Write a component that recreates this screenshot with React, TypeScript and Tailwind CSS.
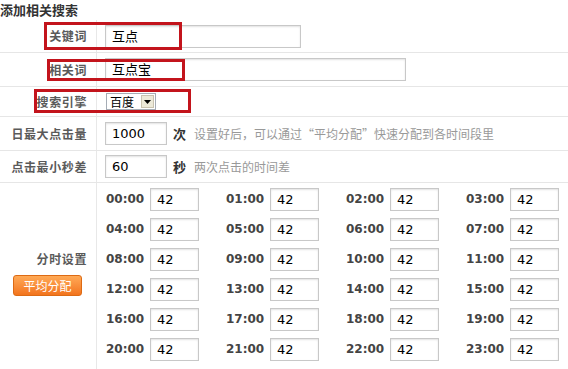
import React from "react";

const cn = '"Noto Sans CJK SC", "Liberation Sans", sans-serif';
const num = '"DejaVu Sans", "Noto Sans CJK SC", sans-serif';

const hours = Array.from({ length: 24 }, (_, i) => `${String(i).padStart(2, "0")}:00`);

function TextBox({ value, width }: { value: string; width: string }) {
  return (
    <div
      className={`${width} h-[23px] border border-[#c8c8c8] bg-white pl-[6px] text-[13px] leading-[21px] text-black shadow-[inset_0_1px_2px_#e2e2e2]`}
      style={{ fontFamily: num }}
    >
      {value}
    </div>
  );
}

function Mark({ className }: { className: string }) {
  // red annotation box drawn over the form
  return <div className={`pointer-events-none absolute border-[3px] border-[#c3141c] ${className}`} />;
}

export default function App() {
  return (
    <div className="w-[568px] h-[369px] overflow-hidden bg-white text-[#333]" style={{ fontFamily: cn }}>
      <div className="h-[20px] text-[13px] font-bold leading-[20px] text-[#333]">添加相关搜索</div>

      {/* 关键词 */}
      <div className="relative flex h-[33px] border-b border-[#e6e6e6]">
        <div className="w-[97px] shrink-0 border-r border-[#e8e8e8] pr-[9px] text-right text-[12px] font-bold leading-[32px] tracking-[0.6px] text-[#5a5a5a]">
          关键词
        </div>
        <div className="flex items-center pl-[8px]">
          <TextBox value="互点" width="w-[196px]" />
        </div>
        <Mark className="left-[44px] top-[2px] h-[28px] w-[138px]" />
      </div>

      {/* 相关词 */}
      <div className="relative flex h-[34px] border-b border-[#e6e6e6]">
        <div className="w-[97px] shrink-0 border-r border-[#e8e8e8] pr-[9px] text-right text-[12px] font-bold leading-[33px] tracking-[0.6px] text-[#5a5a5a]">
          相关词
        </div>
        <div className="flex items-center pl-[8px]">
          <TextBox value="互点宝" width="w-[301px]" />
        </div>
        <Mark className="left-[47px] top-[6px] h-[22px] w-[138px]" />
      </div>

      {/* 搜索引擎 */}
      <div className="relative flex h-[30px] border-b border-[#e6e6e6]">
        <div className="w-[97px] shrink-0 border-r border-[#e8e8e8] pr-[9px] text-right text-[12px] font-bold leading-[29px] tracking-[0.6px] text-[#5a5a5a]">
          搜索引擎
        </div>
        <div className="flex items-center pl-[9px]">
          <div className="flex h-[17px] w-[50px] items-center border border-[#a5acb5] bg-white">
            <span className="pl-[3px] text-[12px] leading-[15px] text-black">百度</span>
            <span className="ml-auto mr-[1px] flex h-[13px] w-[13px] items-center justify-center border border-[#c9c3b0] bg-[#ece9d8]">
              <svg width="7" height="4" viewBox="0 0 7 4">
                <path d="M0 0h7L3.5 4z" fill="#000" />
              </svg>
            </span>
          </div>
        </div>
        <Mark className="left-[34px] top-[2px] h-[24px] w-[157px]" />
      </div>

      {/* 日最大点击量 */}
      <div className="flex h-[34px] border-b border-[#e6e6e6]">
        <div className="w-[97px] shrink-0 border-r border-[#e8e8e8] pr-[9px] text-right text-[12px] font-bold leading-[33px] tracking-[0.6px] text-[#5a5a5a]">
          日最大点击量
        </div>
        <div className="flex items-center pl-[8px]">
          <TextBox value="1000" width="w-[62px]" />
          <span className="ml-[6px] text-[13px] font-bold text-[#333]">次</span>
          <span className="ml-[8px] text-[12px] text-[#999]">设置好后，可以通过“平均分配”快速分配到各时间段里</span>
        </div>
      </div>

      {/* 点击最小秒差 */}
      <div className="flex h-[32px] border-b border-[#e6e6e6]">
        <div className="w-[97px] shrink-0 border-r border-[#e8e8e8] pr-[9px] text-right text-[12px] font-bold leading-[31px] tracking-[0.6px] text-[#5a5a5a]">
          点击最小秒差
        </div>
        <div className="flex items-center pl-[8px]">
          <TextBox value="60" width="w-[62px]" />
          <span className="ml-[6px] text-[13px] font-bold text-[#333]">秒</span>
          <span className="ml-[8px] text-[12px] text-[#999]">两次点击的时间差</span>
        </div>
      </div>

      {/* 分时设置 */}
      <div className="flex h-[190px]">
        <div className="flex w-[97px] shrink-0 flex-col items-end justify-center border-r border-[#e8e8e8] pr-[9px] pb-[10px]">
          <div className="text-[12px] font-bold leading-[16px] tracking-[0.6px] text-[#5a5a5a]">分时设置</div>
          <button className="mr-[5px] mt-[8px] h-[21px] w-[69px] rounded-[3px] border border-[#dd6a14] bg-gradient-to-b from-[#ffa955] to-[#f2741b] text-[12px] leading-[19px] text-white">
            平均分配
          </button>
        </div>
        <div className="grid grid-cols-[120px_120px_120px_120px] content-start gap-y-[7px] pl-[9px] pt-[5px]">
          {hours.map((h) => (
            <div key={h} className="flex items-center">
              <span
                className="w-[44px] text-[12px] font-bold leading-[23px] text-[#444]"
                style={{ fontFamily: num }}
              >
                {h}
              </span>
              <TextBox value="42" width="w-[49px]" />
            </div>
          ))}
        </div>
      </div>
    </div>
  );
}
